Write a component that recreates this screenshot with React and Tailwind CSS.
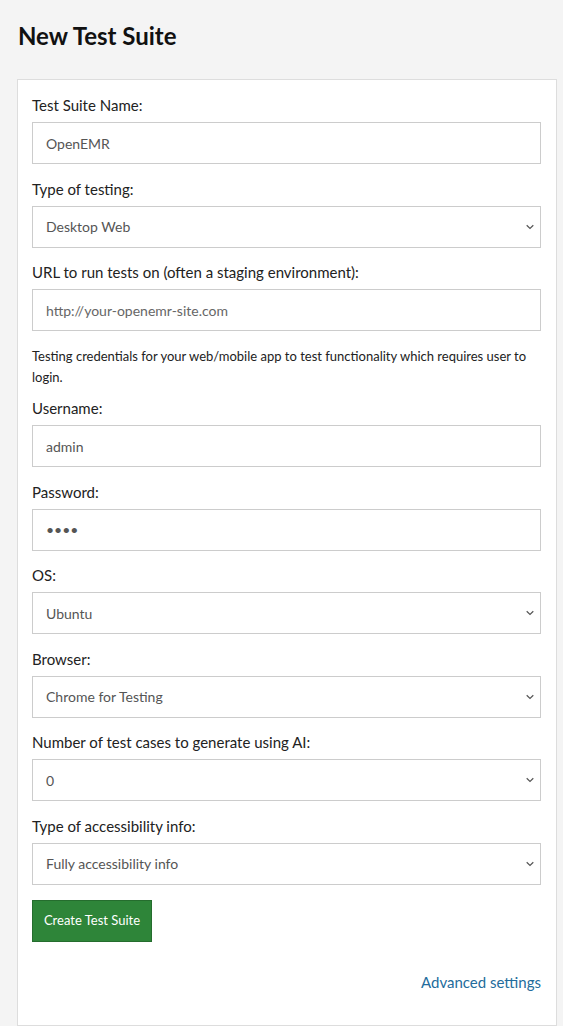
import React from 'react';

const font = { fontFamily: 'Lato, "Open Sans", sans-serif' };

const Label = ({ children }) => (
  <label className="block text-[15px] leading-[21px] text-[#222] mb-[6px]">{children}</label>
);

const Chevron = () => (
  <svg width="10" height="10" viewBox="0 0 10 10" className="absolute right-[6px] top-1/2 -translate-y-1/2 pointer-events-none">
    <path d="M1.7 3.3 L5 6.5 L8.3 3.3" fill="none" stroke="#555" strokeWidth="1.2" />
  </svg>
);

const TextField = ({ label, value, type = 'text', placeholder }) => (
  <div className="mb-[14.5px]">
    <Label>{label}</Label>
    <input
      type={type}
      defaultValue={value}
      placeholder={placeholder}
      className="block w-full h-[42px] border border-[#cccccc] bg-white px-[13px] text-[14px] text-[#555] placeholder:text-[#666] outline-none"
      style={font}
    />
  </div>
);

const SelectField = ({ label, options }) => (
  <div className="mb-[14.5px]">
    <Label>{label}</Label>
    <div className="relative">
      <select
        defaultValue={options[0]}
        className="block w-full h-[42px] border border-[#cccccc] bg-white px-[13px] text-[14px] text-[#555] appearance-none outline-none"
        style={font}
      >
        {options.map((o) => (
          <option key={o}>{o}</option>
        ))}
      </select>
      <Chevron />
    </div>
  </div>
);

export default function App() {
  return (
    <div className="h-screen overflow-hidden bg-[#f4f4f4] pl-[17px] pr-[6px] pt-[21px]" style={font}>
      <h1 className="text-[24px] leading-[30px] font-bold text-[#111] pl-[1px] mb-[28px]">New Test Suite</h1>

      <div className="bg-white border border-[#dddddd] pl-[14px] pr-[15px] pt-[15px] pb-[32px]">
        <TextField label="Test Suite Name:" value="OpenEMR" />
        <SelectField label="Type of testing:" options={['Desktop Web', 'Mobile Web', 'Android', 'iOS']} />
        <TextField label="URL to run tests on (often a staging environment):" placeholder="http://your-openemr-site.com" />

        <p className="text-[13px] leading-[21px] text-[#222] mt-[15px] mb-[10px]">
          Testing credentials for your web/mobile app to test functionality which requires user to login.
        </p>

        <TextField label="Username:" value="admin" />
        <TextField label="Password:" value="pass" type="password" />
        <SelectField label="OS:" options={['Ubuntu', 'Windows', 'macOS']} />
        <SelectField label="Browser:" options={['Chrome for Testing', 'Firefox', 'Edge']} />
        <SelectField label="Number of test cases to generate using AI:" options={['0', '5', '10', '20']} />
        <SelectField label="Type of accessibility info:" options={['Fully accessibility info', 'Partial accessibility info', 'None']} />

        <button
          type="button"
          className="mt-[0.5px] h-[42px] w-[120px] bg-[#2e8539] border border-[#256d2e] text-[13px] text-white"
          style={font}
        >
          Create Test Suite
        </button>

        <div className="mt-[29.5px] text-right leading-[21px]">
          <a href="#" className="text-[15px] leading-[21px] text-[#236c9c]">Advanced settings</a>
        </div>
      </div>
    </div>
  );
}
